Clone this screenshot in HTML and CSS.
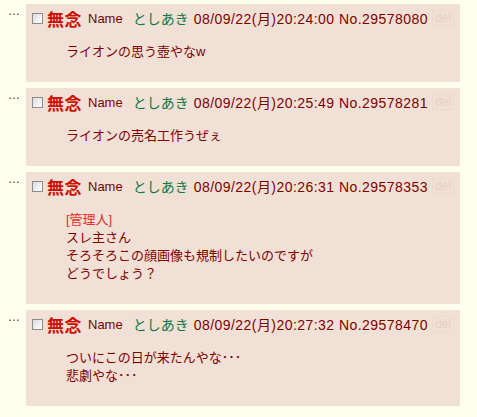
FILE: index.html
```html
<!DOCTYPE html>
<html lang="ja">
<head>
<meta charset="utf-8">
<link rel="stylesheet" href="styles.css">
</head>
<body>
<div class="thread">
  <div class="reply">
    <div class="rts">…</div>
    <div class="rtd">
      <div class="head"><span class="chk"></span><span class="sub">無念</span> <span class="lbl">Name</span> <span class="name">としあき</span> <span class="date">08/09/22(月)20:24:00 No.29578080</span> <span class="del">del</span></div>
      <blockquote class="body">ライオンの思う壺やなw</blockquote>
    </div>
  </div>
  <div class="reply">
    <div class="rts">…</div>
    <div class="rtd">
      <div class="head"><span class="chk"></span><span class="sub">無念</span> <span class="lbl">Name</span> <span class="name">としあき</span> <span class="date">08/09/22(月)20:25:49 No.29578281</span> <span class="del">del</span></div>
      <blockquote class="body">ライオンの売名工作うぜぇ</blockquote>
    </div>
  </div>
  <div class="reply">
    <div class="rts">…</div>
    <div class="rtd">
      <div class="head"><span class="chk"></span><span class="sub">無念</span> <span class="lbl">Name</span> <span class="name">としあき</span> <span class="date">08/09/22(月)20:26:31 No.29578353</span> <span class="del">del</span></div>
      <blockquote class="body"><span class="admin">[管理人]</span><br>スレ主さん<br>そろそろこの顔画像も規制したいのですが<br>どうでしょう？</blockquote>
    </div>
  </div>
  <div class="reply">
    <div class="rts">…</div>
    <div class="rtd">
      <div class="head"><span class="chk"></span><span class="sub">無念</span> <span class="lbl">Name</span> <span class="name">としあき</span> <span class="date">08/09/22(月)20:27:32 No.29578470</span> <span class="del">del</span></div>
      <blockquote class="body">ついにこの日が来たんやな･･･<br>悲劇やな･･･</blockquote>
    </div>
  </div>
</div>
</body>
</html>
```
FILE: styles.css
```css
html, body {
  margin: 0;
  background: #ffffee;
}
body {
  font-family: "Liberation Sans", "Noto Sans CJK JP", sans-serif;
  font-size: 13px;
  color: #800000;
}
.thread {
  padding: 4px 0 0 0;
  display: flex;
  flex-direction: column;
  gap: 6px;
}
.reply {
  display: flex;
  align-items: flex-start;
}
.rts {
  width: 26px;
  box-sizing: border-box;
  padding: 0 0 0 8px;
  font-size: 12px;
  line-height: 14px;
  color: #333;
  letter-spacing: -1px;
}
.rtd {
  width: 434px;
  background: #f0e0d6;
  padding: 4px 4px 5px 4px;
  box-sizing: border-box;
}
.head {
  display: flex;
  align-items: center;
  height: 20px;
  white-space: nowrap;
}
.chk {
  display: inline-block;
  width: 11px;
  height: 11px;
  box-sizing: border-box;
  border: 1px solid #8c8c8c;
  background: linear-gradient(135deg, #dcdcdc, #ffffff);
  margin: 0 4px 0 2px;
  flex: none;
}
.sub {
  color: #cc1105;
  font-weight: bold;
  font-size: 17px;
  letter-spacing: 0.5px;
  margin-right: 6px;
}
.lbl {
  font-size: 13px;
  margin-right: 10px;
}
.name {
  color: #117743;
  font-size: 14px;
  margin-right: 5px;
}
.date {
  font-size: 14px;
  letter-spacing: 0.45px;
  margin-right: 4px;
}
.del {
  font-size: 12px;
  color: #e6d0c6;
  border: 1px solid #ecd9cf;
  padding: 0 2px;
  line-height: 14px;
}
.body {
  margin: 15px 0 16px 36px;
  font-size: 13px;
  line-height: 18px;
}
.admin {
  color: #e0302a;
}
```
